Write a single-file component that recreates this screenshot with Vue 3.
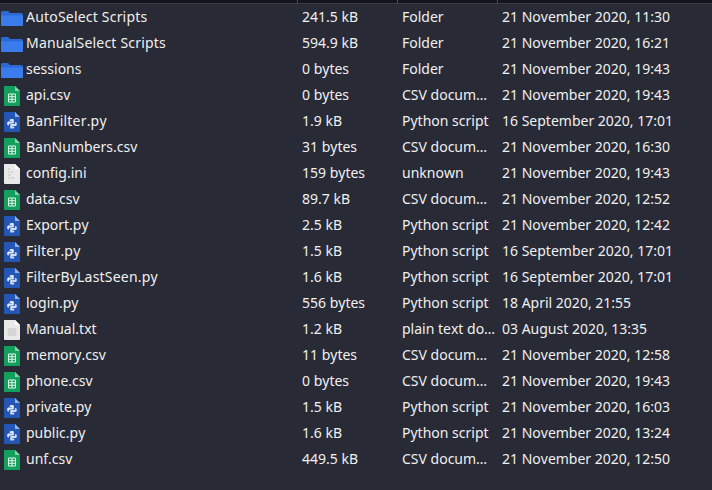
<script setup>
const rows = [
  ['AutoSelect Scripts', '241.5 kB', 'Folder', '21 November 2020, 11:30', 'folder'],
  ['ManualSelect Scripts', '594.9 kB', 'Folder', '21 November 2020, 16:21', 'folder'],
  ['sessions', '0 bytes', 'Folder', '21 November 2020, 19:43', 'folder'],
  ['api.csv', '0 bytes', 'CSV docum…', '21 November 2020, 19:43', 'csv'],
  ['BanFilter.py', '1.9 kB', 'Python script', '16 September 2020, 17:01', 'py'],
  ['BanNumbers.csv', '31 bytes', 'CSV docum…', '21 November 2020, 16:30', 'csv'],
  ['config.ini', '159 bytes', 'unknown', '21 November 2020, 19:43', 'ini'],
  ['data.csv', '89.7 kB', 'CSV docum…', '21 November 2020, 12:52', 'csv'],
  ['Export.py', '2.5 kB', 'Python script', '21 November 2020, 12:42', 'py'],
  ['Filter.py', '1.5 kB', 'Python script', '16 September 2020, 17:01', 'py'],
  ['FilterByLastSeen.py', '1.6 kB', 'Python script', '16 September 2020, 17:01', 'py'],
  ['login.py', '556 bytes', 'Python script', '18 April 2020, 21:55', 'py'],
  ['Manual.txt', '1.2 kB', 'plain text do…', '03 August 2020, 13:35', 'txt'],
  ['memory.csv', '11 bytes', 'CSV docum…', '21 November 2020, 12:58', 'csv'],
  ['phone.csv', '0 bytes', 'CSV docum…', '21 November 2020, 19:43', 'csv'],
  ['private.py', '1.5 kB', 'Python script', '21 November 2020, 16:03', 'py'],
  ['public.py', '1.6 kB', 'Python script', '21 November 2020, 13:24', 'py'],
  ['unf.csv', '449.5 kB', 'CSV docum…', '21 November 2020, 12:50', 'csv'],
].map(([name, size, type, date, kind]) => ({ name, size, type, date, kind, wide: /Select|Filter/.test(name) }))
</script>

<template>
  <div class="view">
    <div class="head">
      <span class="hcell first"></span>
      <span class="hcell"></span>
      <span class="hcell"></span>
      <span class="hcell"></span>
    </div>
    <div class="list">
      <div v-for="r in rows" :key="r.name" class="row">
        <span class="icon">
          <svg v-if="r.kind === 'folder'" width="24" height="22" viewBox="0 0 24 22">
            <path d="M1 6.500a1.500 1.500 0 0 1 1.500-1.500h5.500l2 2h11a2 2 0 0 1 2 2v9.500a1.500 1.500 0 0 1-1.500 1.500h-19a1.500 1.500 0 0 1-1.500-1.500z" fill="#2c69d6"/>
            <path d="M1 9.500h22v9a1.500 1.500 0 0 1-1.500 1.500h-19a1.500 1.500 0 0 1-1.500-1.500z" fill="#3b7cec"/>
          </svg>
          <svg v-else width="24" height="24" viewBox="0 0 24 24">
            <template v-if="r.kind === 'csv'">
              <path d="M4 3h11l5 5v14a1 1 0 0 1-1 1H5a1 1 0 0 1-1-1z" fill="#12a05c"/>
              <path d="M15 3l5 5h-5z" fill="#86cfa8"/>
              <path d="M8.500 11h7v8h-7zM8.500 13.700h7M8.500 16.300h7M12 11v8" fill="none" stroke="#e6f5ec" stroke-width="1"/>
            </template>
            <template v-else-if="r.kind === 'py'">
              <path d="M4 3h11l5 5v14a1 1 0 0 1-1 1H5a1 1 0 0 1-1-1z" fill="#2457b5"/>
              <path d="M15 3l5 5h-5z" fill="#8fb0e6"/>
              <path d="M9.800 10.800c0-1.200 4-1.200 4 0v2.600c0 .6-.4 1-1 1h-2.300c-1 0-1.700.7-1.700 1.700v.4h-.5c-1.500 0-1.500-4 0-4h3.700v-.5H9.800z" fill="#e3ebf8"/>
              <path d="M14.200 20.200c0 1.200-4 1.200-4 0v-2.600c0-.6.400-1 1-1h2.300c1 0 1.700-.7 1.700-1.700v-.4h.5c1.500 0 1.500 4 0 4h-3.700v.5h2.200z" fill="#cfdcf4" transform="translate(0 -1.500)"/>
            </template>
            <template v-else>
              <path d="M4 3h11l5 5v14a1 1 0 0 1-1 1H5a1 1 0 0 1-1-1z" fill="#e9e9e9"/>
              <path d="M15 3l5 5h-5z" fill="#ffffff"/>
              <path v-if="r.kind === 'txt'" d="M7.500 12h9M7.500 14h9M7.500 16h9M7.500 18h9" stroke="#c2c2c2" stroke-width="1"/>
              <path v-else d="M8 8h2M8 11h1.500M11 11h2M8 14h2.500M8 17h1.500M11 17h3" stroke="#bdbdbd" stroke-width="1.200"/>
            </template>
          </svg>
        </span>
        <span class="cell name" :class="{ wide: r.wide }">{{ r.name }}</span>
        <span class="cell size">{{ r.size }}</span>
        <span class="cell type">{{ r.type }}</span>
        <span class="cell date">{{ r.date }}</span>
      </div>
    </div>
  </div>
</template>

<style>
html, body { margin: 0; background: #282a36; }
</style>

<style scoped>
.view {
  width: 712px;
  height: 490px;
  overflow: hidden;
  background: #282a36;
  color: #f0f0f0;
  font: 14px/26px "Noto Sans", sans-serif;
  font-kerning: none;
}
.head {
  display: grid;
  grid-template-columns: 297px 100px 100px 1fr;
  height: 3px;
  background: #14151c;
  border-bottom: 1px solid #3a3c48;
}
.hcell { border-left: 1px solid #4a4c58; }
.hcell.first { border-left: 0; }
.row {
  display: grid;
  grid-template-columns: 26px 276px 100px 100px 1fr;
  height: 26px;
  white-space: nowrap;
}
.icon {
  display: flex;
  align-items: center;
  justify-content: flex-start;
}
.cell { overflow: hidden; }
.wide { letter-spacing: 0.2px; }
</style>
